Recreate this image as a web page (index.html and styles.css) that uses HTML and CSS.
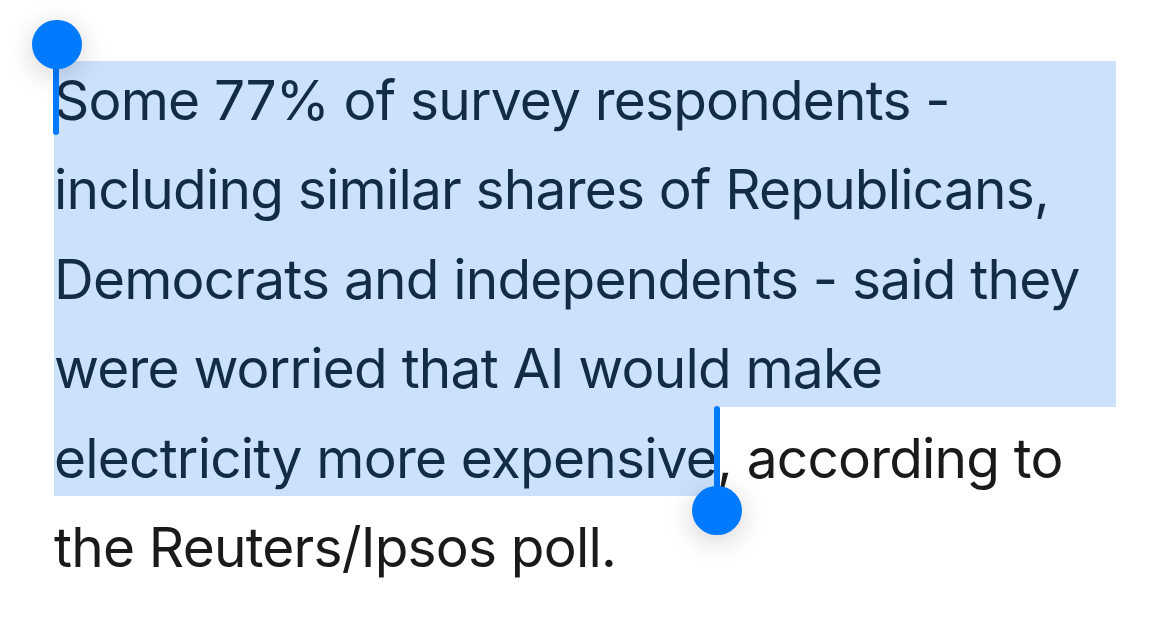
FILE: index.html
```html
<!DOCTYPE html>
<html lang="en">
<head>
<meta charset="utf-8">
<title>Selected text</title>
<link rel="stylesheet" href="styles.css">
</head>
<body>
<main class="page">
  <div class="text">
    <div class="sel">
      <div class="line first">Some 77% of survey respondents -</div>
      <div class="line">including similar shares of Republicans,</div>
      <div class="line">Democrats and independents - said they</div>
      <div class="line">were worried that AI would make</div>
    </div>
    <div class="line split"><span class="seg hl">electricity more expensive</span><span class="seg">, according to</span></div>
    <div class="line">the Reuters/Ipsos poll.</div>
  </div>
  <div class="handle handle-start"><span class="knob"></span><span class="stem"></span></div>
  <div class="handle handle-end"><span class="stem"></span><span class="knob"></span></div>
</main>
</body>
</html>
```

FILE: styles.css
```css
html, body {
  margin: 0;
  padding: 0;
  background: #ffffff;
}

.page {
  position: relative;
  width: 1170px;
  height: 628px;
  overflow: hidden;
  padding-top: 61px;
  box-sizing: border-box;
  font-family: "Inter", "Noto Sans", sans-serif;
  font-size: 55px;
  letter-spacing: -0.8px;
  color: #1a1a1a;
}

.text {
  margin-left: 54px;
}

.sel {
  width: 1062px;
  background: #cce2fc;
  color: #142b48;
}

.line {
  box-sizing: border-box;
  height: 89.4px;
  padding-top: 18px;
  line-height: normal;
  white-space: nowrap;
}

.line.first {
  height: 77.4px;
  padding-top: 6px;
}

.line.split {
  display: flex;
  align-items: stretch;
  padding-top: 0;
}

.seg {
  padding-top: 18px;
  white-space: pre;
}

.seg.hl {
  background: #cce2fc;
  color: #142b48;
}

.handle {
  position: absolute;
  width: 50px;
  display: flex;
  flex-direction: column;
  align-items: center;
}

.handle-start {
  left: 32px;
  top: 20px;
}

.handle-end {
  left: 692px;
  top: 406px;
}

.knob {
  width: 49.4px;
  height: 49.4px;
  border-radius: 50%;
  background: #007aff;
  box-shadow: 0 6px 28px rgba(0, 0, 0, 0.18);
  position: relative;
  z-index: 1;
}

.stem {
  width: 5.7px;
  background: #007aff;
  border-radius: 3px;
}

.handle-start .stem {
  height: 92px;
  margin-top: -26px;
  margin-left: -2px;
}

.handle-end .stem {
  height: 100px;
  margin-bottom: -20px;
  margin-left: 0;
}
```
